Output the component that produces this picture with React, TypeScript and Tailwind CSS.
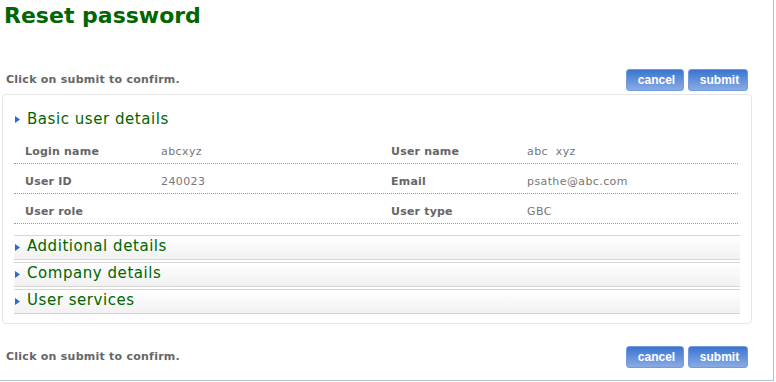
import React from "react";

const rows = [
  { label: "Login name", value: "abcxyz", label2: "User name", value2: "abc\u00a0 xyz" },
  { label: "User ID", value: "240023", label2: "Email", value2: "psathe@abc.com" },
  { label: "User role", value: "", label2: "User type", value2: "GBC" },
];

const sections = ["Additional details", "Company details", "User services"];

function Arrow() {
  return (
    <svg width="5" height="7" viewBox="0 0 5 7" className="shrink-0">
      <path d="M0 0 L5 3.5 L0 7 Z" fill="#2d6bc9" />
    </svg>
  );
}

function ActionBar() {
  return (
    <div className="flex h-[22px] items-center justify-between pr-[4px] pl-[4px]">
      <p className="text-[11px] font-bold tracking-[0.25px] text-[#666]">Click on submit to confirm.</p>
      <div className="flex gap-[4px]">
        <button className="h-[22px] w-[58px] rounded-[3px] border border-[#6f9be0] bg-gradient-to-b from-[#3a74d0] to-[#89abe3] pl-[3px] font-['Liberation_Sans',Arial,sans-serif] text-[12px] font-bold text-white">
          cancel
        </button>
        <button className="h-[22px] w-[60px] rounded-[3px] border border-[#6f9be0] bg-gradient-to-b from-[#3a74d0] to-[#89abe3] pl-[3px] font-['Liberation_Sans',Arial,sans-serif] text-[12px] font-bold text-white">
          submit
        </button>
      </div>
    </div>
  );
}

export default function App() {
  return (
    <div className="h-[381px] w-[774px] border-r border-b border-[#a9c3dc] bg-white font-['DejaVu_Sans',Verdana,sans-serif]">
      <div className="ml-[2px] w-[750px]">
        <h1 className="pt-[2px] pl-[2px] text-[22px] leading-[27px] font-bold text-[#006600]">Reset password</h1>

        <div className="mt-[40px]">
          <ActionBar />
        </div>

        <section className="mt-[3px] h-[230px] rounded-[4px] border border-[#e6e6e6] px-[11px]">
          <div className="mt-[15px] flex items-center gap-[7px] pl-[1px]">
            <Arrow />
            <h2 className="text-[15px] leading-[18px] tracking-[0.55px] text-[#006600]">Basic user details</h2>
          </div>

          <div className="mt-[6px] mr-[2px]">
            {rows.map((row) => (
              <div
                key={row.label}
                className="grid h-[30px] grid-cols-[136px_230px_136px_1fr] border-b border-dotted border-[#9a9a9a] pt-[11px] pl-[11px] text-[11px] leading-[13px]"
              >
                <span className="font-bold tracking-[0.2px] text-[#666]">{row.label}</span>
                <span className="tracking-[0.4px] text-[#777]">{row.value}</span>
                <span className="font-bold tracking-[0.2px] text-[#666]">{row.label2}</span>
                <span className="tracking-[0.4px] text-[#777]">{row.value2}</span>
              </div>
            ))}
          </div>

          <div className="mt-[11px] flex flex-col gap-[2px]">
            {sections.map((name) => (
              <div
                key={name}
                className="flex h-[25px] items-center gap-[7px] border-y border-[#d6d6d6] bg-gradient-to-b from-white to-[#f1f1f1] pl-[1px]"
              >
                <Arrow />
                <h2 className="mb-[3px] text-[15px] leading-[18px] tracking-[0.55px] text-[#006600]">{name}</h2>
              </div>
            ))}
          </div>
        </section>

        <div className="mt-[22px]">
          <ActionBar />
        </div>
      </div>
    </div>
  );
}
